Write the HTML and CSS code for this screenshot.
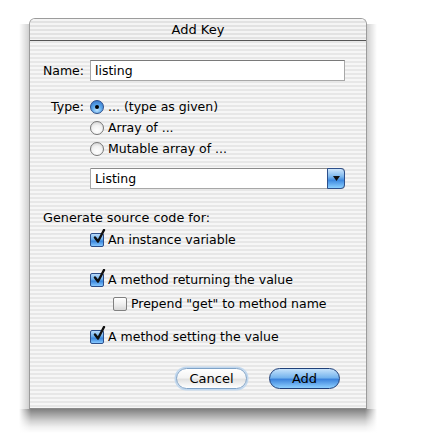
FILE: index.html
```html
<!DOCTYPE html>
<html>
<head>
<meta charset="utf-8">
<link rel="stylesheet" href="styles.css">
</head>
<body>
<div class="frame">
<div class="window">
  <div class="titlebar">Add Key</div>
  <div class="content">
    <div class="row name-row">
      <span class="label">Name:</span>
      <div class="textfield">listing</div>
    </div>
    <div class="row type-row">
      <span class="label">Type:</span>
      <div class="opt"><span class="radio on"></span><span>... (type as given)</span></div>
    </div>
    <div class="row opt-row">
      <span class="label"></span>
      <div class="opt"><span class="radio"></span><span>Array of ...</span></div>
    </div>
    <div class="row opt-row">
      <span class="label"></span>
      <div class="opt"><span class="radio"></span><span>Mutable array of ...</span></div>
    </div>
    <div class="row popup-row">
      <span class="label"></span>
      <div class="popup"><span class="popup-text">Listing</span><span class="popup-btn"><svg width="7" height="5" viewBox="0 0 7 5"><path d="M0 0H7L3.5 5Z" fill="#111"/></svg></span></div>
    </div>
    <div class="section">Generate source code for:</div>
    <div class="check-row first"><span class="check on"><svg viewBox="0 0 14 16" width="14" height="16"><path d="M3 8.5 L6 12.5 L12 1" fill="none" stroke="#111" stroke-width="2.4" stroke-linecap="round" stroke-linejoin="round"/></svg></span><span>An instance variable</span></div>
    <div class="check-row gap-lg"><span class="check on"><svg viewBox="0 0 14 16" width="14" height="16"><path d="M3 8.5 L6 12.5 L12 1" fill="none" stroke="#111" stroke-width="2.4" stroke-linecap="round" stroke-linejoin="round"/></svg></span><span>A method returning the value</span></div>
    <div class="check-row sub"><span class="check"></span><span>Prepend "get" to method name</span></div>
    <div class="check-row gap-md"><span class="check on"><svg viewBox="0 0 14 16" width="14" height="16"><path d="M3 8.5 L6 12.5 L12 1" fill="none" stroke="#111" stroke-width="2.4" stroke-linecap="round" stroke-linejoin="round"/></svg></span><span>A method setting the value</span></div>
    <div class="buttons">
      <button class="btn cancel">Cancel</button>
      <button class="btn add">Add</button>
    </div>
  </div>
</div>
</div>
</body>
</html>
```

FILE: styles.css
```css
html, body {
  margin: 0;
  padding: 0;
  background: #ffffff;
}
body {
  font-family: "DejaVu Sans", "Liberation Sans", sans-serif;
  font-size: 12px;
  color: #000;
  padding: 18px 0 0 19px;
}
.frame {
  width: 338px;
  padding: 0 10px 24px;
  background:
    linear-gradient(to right, #fff 0, rgba(255,255,255,0) 12px, rgba(255,255,255,0) 346px, #fff 358px) 0 391px / 358px 24px no-repeat,
    linear-gradient(to bottom, rgba(0,0,0,0.5) 0, rgba(0,0,0,0.34) 25%, rgba(0,0,0,0.18) 50%, rgba(0,0,0,0.06) 75%, rgba(0,0,0,0) 100%) 0 391px / 358px 24px no-repeat,
    linear-gradient(to left, rgba(0,0,0,0.18) 0, rgba(0,0,0,0) 100%) 0 6px / 10px 385px no-repeat,
    linear-gradient(to right, rgba(0,0,0,0.18) 0, rgba(0,0,0,0) 100%) 348px 6px / 10px 385px no-repeat;
}
.window {
  width: 336px;
  height: 389px;
  border: 1px solid #9c9c9c;
  border-bottom-color: #8a8a8a;
  border-radius: 6px 6px 0 0;
  background: repeating-linear-gradient(to bottom, #f6f6f6 0, #f6f6f6 2px, #e7e7e7 2px, #e7e7e7 4px);
  overflow: hidden;
}
.titlebar {
  height: 21px;
  line-height: 22px;
  text-align: center;
  font-size: 13px;
  border-bottom: 1px solid #555;
  background: repeating-linear-gradient(to bottom, #f4f4f4 0, #f4f4f4 2px, #e2e2e2 2px, #e2e2e2 4px);
}
.content {
  display: flex;
  flex-direction: column;
}
.row {
  display: flex;
  align-items: center;
  gap: 6px;
}
.label {
  width: 54px;
  text-align: right;
  flex: none;
  font-size: 12.5px;
}
.name-row {
  margin-top: 19px;
}
.textfield {
  width: 249px;
  height: 19px;
  line-height: 20px;
  padding-left: 4px;
  background: #fff;
  border: 1px solid #a8a8a8;
  border-top-color: #7a7a7a;
  font-size: 12.5px;
}
.type-row {
  margin-top: 15px;
  height: 21px;
}
.opt-row {
  height: 21px;
}
.opt {
  display: flex;
  align-items: center;
  gap: 4px;
  font-size: 12.5px;
}
.radio {
  width: 12px;
  height: 12px;
  border-radius: 50%;
  border: 1px solid #777;
  background: radial-gradient(circle at 50% 70%, #ffffff 0, #f2f2f2 50%, #c8c8c8 100%);
  flex: none;
  position: relative;
}
.radio.on {
  border-color: #2d4f8a;
  background: radial-gradient(circle at 50% 75%, #bfe4ff 0, #5aa6ea 45%, #2f6bc4 100%);
}
.radio.on::after {
  content: "";
  position: absolute;
  left: 4px;
  top: 4px;
  width: 4px;
  height: 4px;
  border-radius: 50%;
  background: #000;
}
.popup-row {
  margin-top: 9px;
}
.popup {
  width: 253px;
  height: 19px;
  display: flex;
  align-items: stretch;
  background: #fff;
  border: 1px solid #a8a8a8;
  border-top-color: #8a8a8a;
  border-radius: 0 4px 4px 0;
}
.popup-text {
  flex: 1;
  padding-left: 4px;
  line-height: 20px;
  font-size: 12.5px;
}
.popup-btn {
  width: 16px;
  margin: -1px -1px -1px 0;
  border: 1px solid #2d4f8a;
  border-radius: 0 4px 4px 0;
  background: linear-gradient(to bottom, #cfe6fb 0, #7db8ee 40%, #3f8ae0 60%, #8cd0ff 100%);
  display: flex;
  align-items: center;
  justify-content: center;
}
.section {
  margin-top: 21px;
  margin-left: 13px;
  height: 16px;
  line-height: 16px;
  font-size: 12.8px;
}
.check-row {
  display: flex;
  align-items: center;
  gap: 4px;
  height: 21px;
  margin-left: 60px;
  font-size: 12.5px;
}
.check-row.first {
  margin-top: 3px;
}
.check-row.gap-lg {
  margin-top: 19px;
}
.check-row.sub {
  margin-left: 83px;
  margin-top: 3px;
}
.check-row.gap-md {
  margin-top: 12px;
}
.check {
  width: 12px;
  height: 12px;
  border: 1px solid #808080;
  border-radius: 2px;
  background: linear-gradient(to bottom, #ffffff 0, #f0f0f0 50%, #d8d8d8 100%);
  flex: none;
  position: relative;
}
.check.on {
  border-color: #2d4f8a;
  background: linear-gradient(to bottom, #b9dbfb 0, #6aaeeb 45%, #3a86dc 60%, #86c8ff 100%);
}
.check svg {
  position: absolute;
  left: 1px;
  top: -5px;
}
.buttons {
  display: flex;
  justify-content: flex-end;
  gap: 22px;
  margin-top: 21px;
  padding-right: 26px;
}
.btn {
  height: 21px;
  border-radius: 11px;
  font-family: "DejaVu Sans", "Liberation Sans", sans-serif;
  font-size: 13px;
  padding: 0;
  color: #000;
}
.cancel {
  width: 71px;
  border: 1px solid #7fa3c8;
  box-shadow: 0 0 0 1.5px #c2d8ee;
  background: linear-gradient(to bottom, #ffffff 0, #f4f4f4 45%, #e2e2e2 55%, #ffffff 100%);
}
.add {
  width: 71px;
  border: 1px solid #1f3f78;
  background: linear-gradient(to bottom, #c5e2fb 0, #77b5ee 45%, #3d84dc 55%, #8fd0ff 100%);
}
```
